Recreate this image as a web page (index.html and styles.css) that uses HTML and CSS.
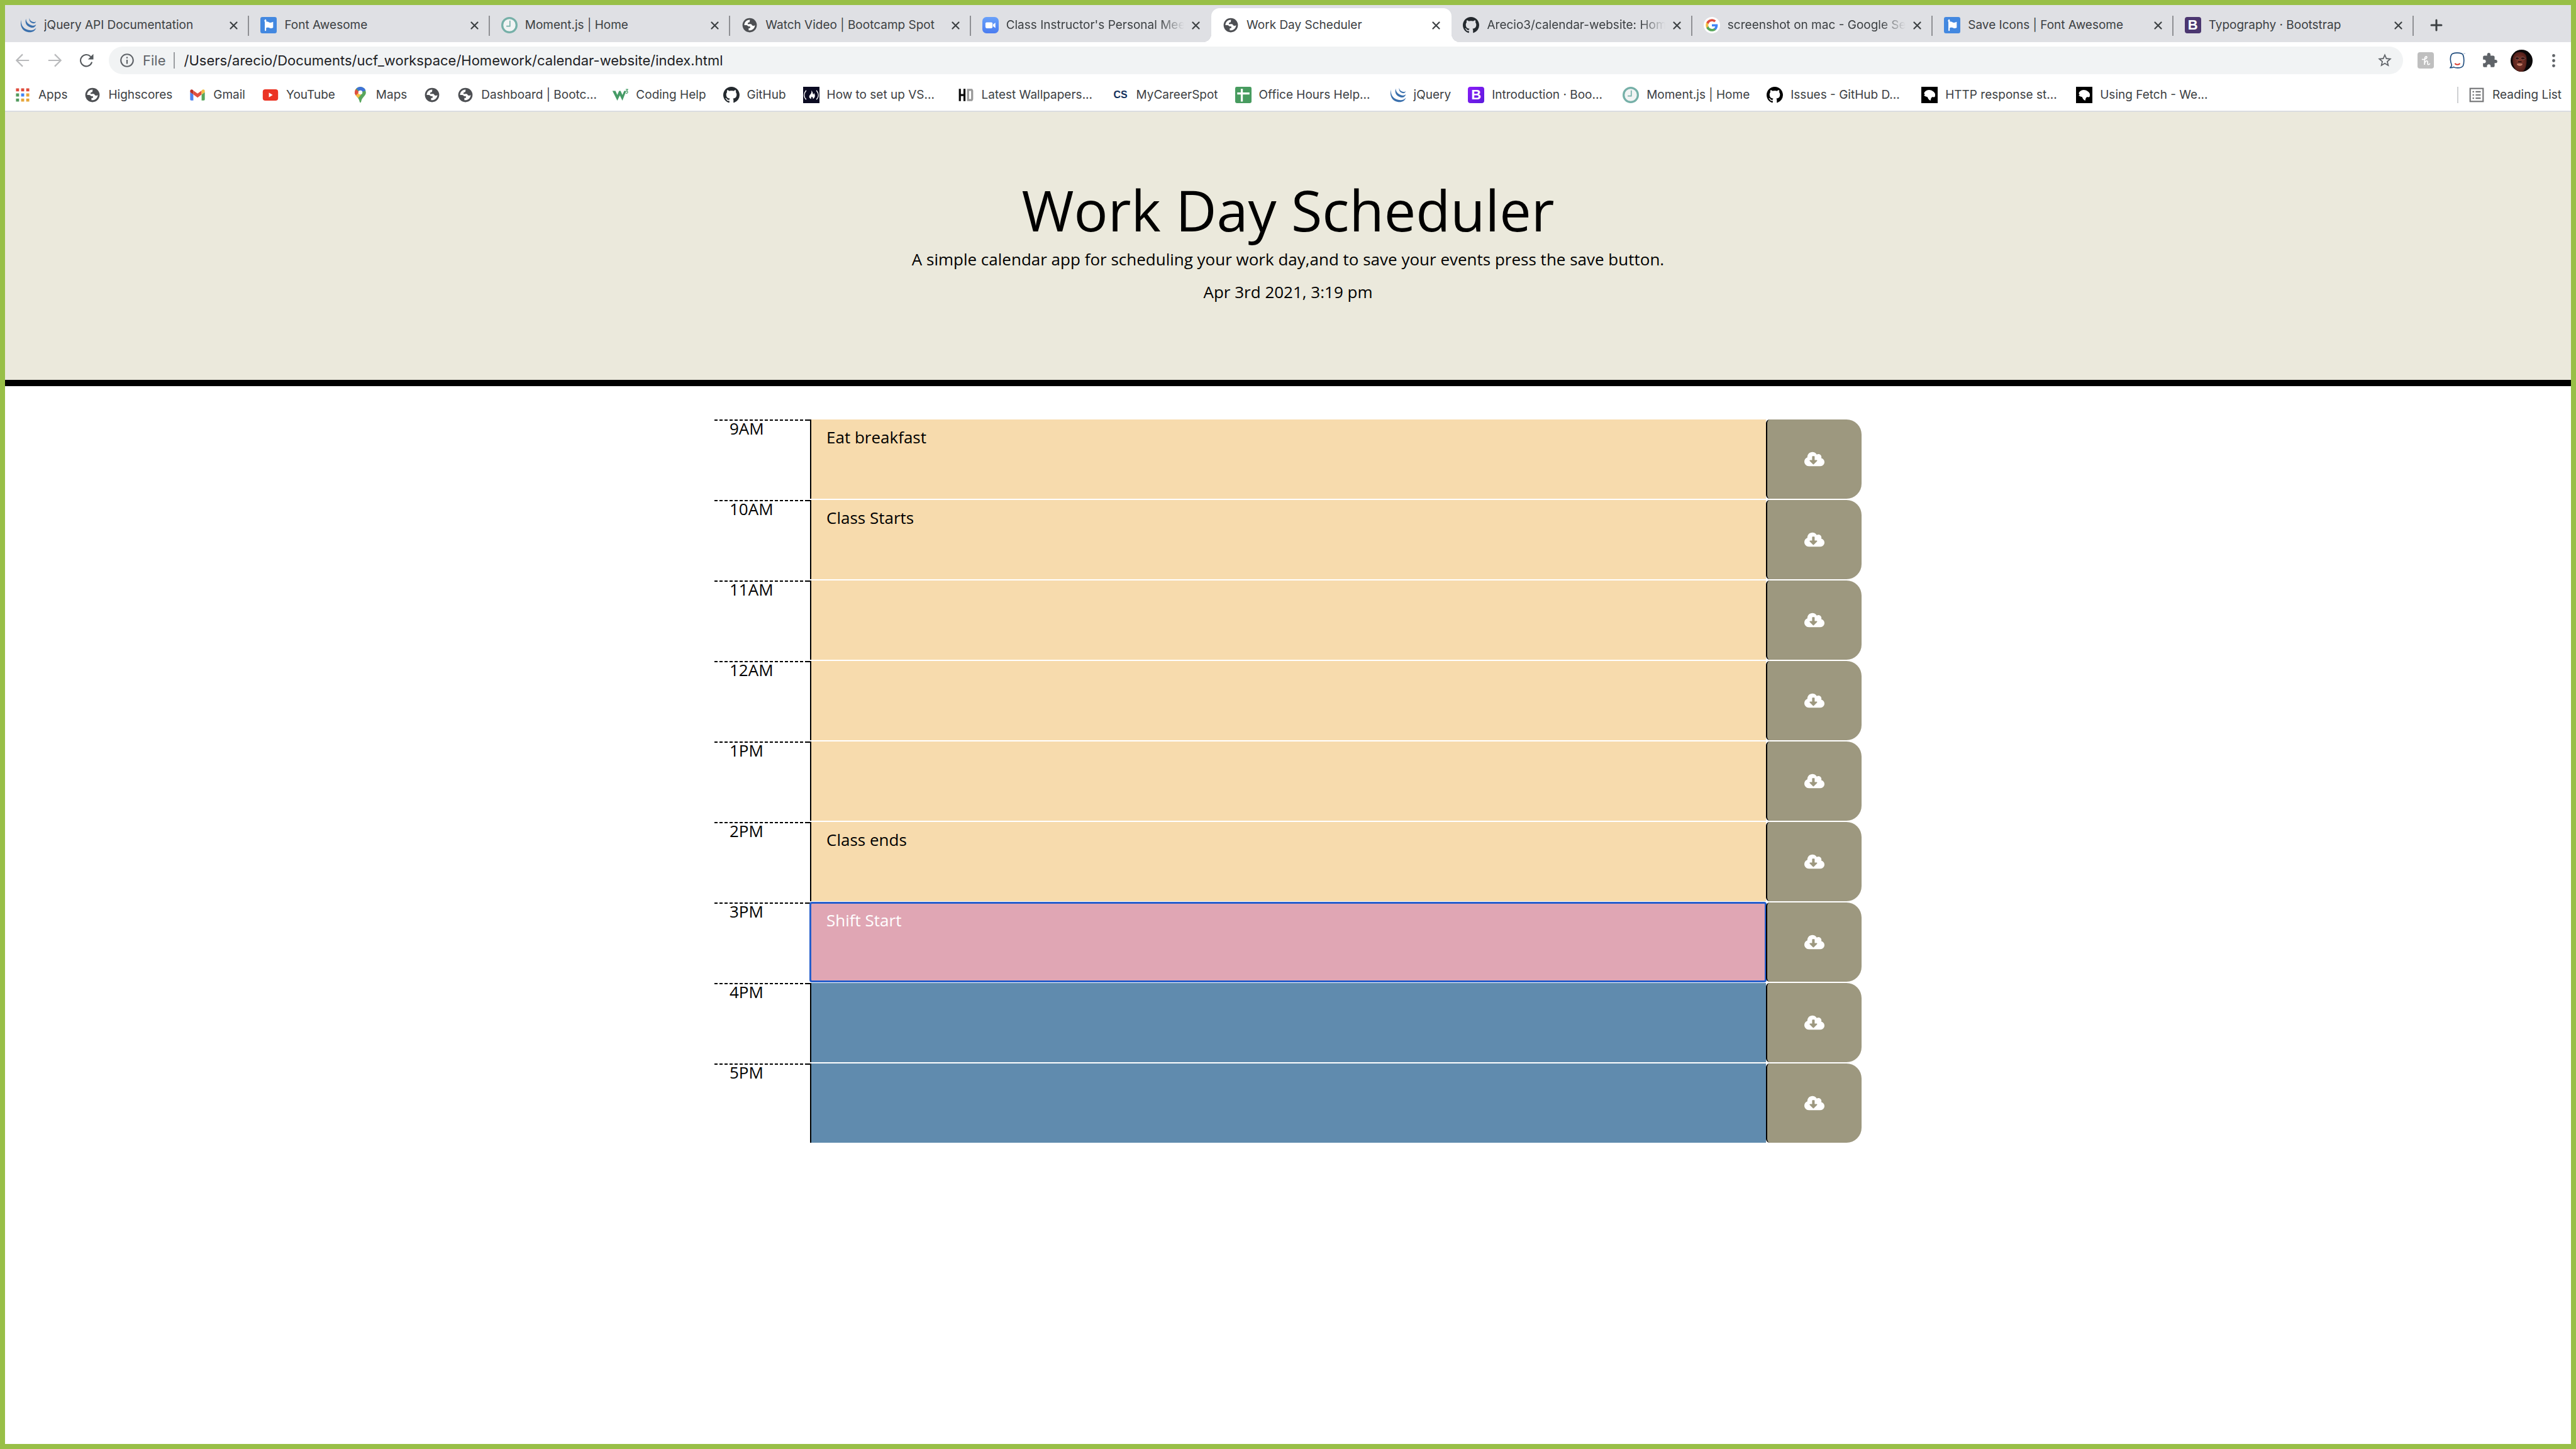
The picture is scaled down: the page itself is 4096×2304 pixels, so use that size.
FILE: index.html
```html
<!DOCTYPE html>
<html lang="en">
<head>
<meta charset="utf-8">
<title>Work Day Scheduler</title>
<link rel="stylesheet" href="styles.css">
</head>
<body>
<svg class="sprite" aria-hidden="true">
  <defs>
    <linearGradient id="zoom-blue" x1="0" y1="0" x2="0" y2="1"><stop offset="0" stop-color="#69a1fa"/><stop offset="1" stop-color="#4a7cf0"/></linearGradient>
    <linearGradient id="boot-violet" x1="0" y1="0" x2="1" y2="1"><stop offset="0" stop-color="#8a1cf8"/><stop offset="1" stop-color="#5a1bdc"/></linearGradient>
    <radialGradient id="face" cx=".5" cy=".5" r=".6"><stop offset="0" stop-color="#8a3d30"/><stop offset="1" stop-color="#4a1a16"/></radialGradient>
    <clipPath id="avatar-clip"><circle cx="22" cy="22" r="22"/></clipPath>
  </defs>
  <symbol id="i-jquery" viewBox="0 0 100 96"><g fill="#3a70ad"><path d="M8 14C-4 42 8 86 52 91c24 2 40-8 46-26-10 12-26 17-46 13C20 72 2 46 8 14z"/><path d="M36 9c-9 22 2 49 33 54 16 2 25-6 29-20-8 8-18 10-29 6-20-7-33-20-33-40z"/><path d="M57 4c-4 18 8 32 24 33 10 0 14-5 16-12-6 5-13 6-20 3C64 24 57 15 57 4z"/></g></symbol>
  <symbol id="i-flag" viewBox="0 0 32 32"><rect width="32" height="32" rx="4" fill="#4388e0"/><path d="M10 6v20" stroke="#fff" stroke-width="2.600" stroke-linecap="round"/><circle cx="9.700" cy="7.500" r="2" fill="#fff"/><path d="M10 10c4-3 7 2 10 1 2 0 3-1 5-1.500V21c-4 2-6 1-8 0-3-1-5 0-7 1z" fill="#fff"/></symbol>
  <symbol id="i-moment" viewBox="0 0 32 32"><circle cx="16" cy="16" r="14" fill="#f2f4f4" stroke="#76b0a8" stroke-width="4"/><path d="M17 7v11h-7" fill="none" stroke="#76b0a8" stroke-width="2"/></symbol>
  <symbol id="i-globe" viewBox="-2 -2 32 32"><circle cx="14" cy="14" r="14" fill="#4d4f53"/><path d="M14.500 3.500C8.500 3 3.500 8 3.500 14h4c2.500 0 3 2.600 5 2.600H15v3.200h-3v4.400c7 .6 12.300-4.200 12.400-10.200-1.600 2-4.700 1.200-5.900 0-1-3-4-2-8-2-.8-2 .5-3.200 2.500-3.400 1.500-.3 1-2.600 1.500-5.100z" fill="#fff"/></symbol>
  <symbol id="i-zoom" viewBox="0 0 32 32"><rect width="32" height="32" rx="8" fill="url(#zoom-blue)"/><rect x="6" y="10.500" width="14" height="11.500" rx="2.500" fill="#fff"/><path d="M21 14.500l4.500-3.500v10.500L21 18z" fill="#fff"/></symbol>
  <symbol id="i-github" viewBox="0 0 16 16"><path fill="currentColor" d="M8 0C3.580 0 0 3.580 0 8c0 3.540 2.290 6.530 5.470 7.590.4.07.55-.17.55-.38 0-.19-.01-.82-.01-1.490-2.010.37-2.530-.49-2.690-.94-.09-.23-.48-.94-.82-1.130-.28-.15-.68-.52-.01-.53.63-.01 1.080.58 1.230.82.72 1.210 1.870.87 2.330.66.07-.52.28-.87.51-1.070-1.780-.2-3.640-.89-3.640-3.950 0-.87.31-1.590.82-2.150-.08-.2-.36-1.020.08-2.120 0 0 .67-.21 2.200.82.64-.18 1.320-.27 2-.27.68 0 1.360.09 2 .27 1.530-1.040 2.200-.82 2.200-.82.44 1.100.16 1.920.08 2.120.51.56.82 1.270.82 2.150 0 3.070-1.870 3.750-3.650 3.950.29.25.54.73.54 1.480 0 1.070-.01 1.930-.01 2.200 0 .21.15.46.55.38A8.013 8.013 0 0016 8c0-4.420-3.580-8-8-8z"/></symbol>
  <symbol id="i-google" viewBox="0 0 32 32"><circle cx="16" cy="16" r="16" fill="#fff"/><g transform="translate(4 4)"><path fill="#4285f4" d="M23.500 12.300c0-.8-.1-1.600-.2-2.300H12v4.500h6.500c-.3 1.500-1.100 2.800-2.400 3.600v3h3.900c2.200-2.100 3.500-5.200 3.500-8.800z"/><path fill="#57a65a" d="M12 24c3.200 0 6-1.100 8-2.900l-3.900-3c-1.100.7-2.500 1.200-4.100 1.200-3.100 0-5.800-2.100-6.700-5h-4v3.100C3.300 21.300 7.300 24 12 24z"/><path fill="#f3bd42" d="M5.300 14.300c-.5-1.500-.5-3.100 0-4.600V6.600h-4c-1.700 3.400-1.700 7.400 0 10.800z"/><path fill="#e04f3f" d="M12 4.700c1.800 0 3.300.6 4.600 1.800L20 3.100C17.900 1.200 15.200 0 12 0 7.300 0 3.300 2.700 1.300 6.600l4 3.100c.9-2.900 3.600-5 6.700-5z"/></g></symbol>
  <symbol id="i-close" viewBox="0 0 13 13"><path d="M1.500 1.500l10 10m0-10l-10 10" stroke="#3c4043" stroke-width="2.200" stroke-linecap="round"/></symbol>
  <symbol id="i-plus" viewBox="0 0 20 20"><path d="M10 2v16M2 10h16" stroke="#3c4043" stroke-width="3" stroke-linecap="round"/></symbol>
  <symbol id="i-back" viewBox="0 0 80 78"><path d="M77 39H6M40 4L5 39l35 35" fill="none" stroke="#b9babc" stroke-width="8"/></symbol>
  <symbol id="i-forward" viewBox="0 0 80 78"><path d="M3 39h71M40 4l35 35-35 35" fill="none" stroke="#b9babc" stroke-width="8"/></symbol>
  <symbol id="i-reload" viewBox="0 0 84 80"><path d="M72 53A35 35 0 1 1 64 16" fill="none" stroke="#55595d" stroke-width="8" stroke-linecap="round"/><path d="M82 1v33H49z" fill="#55595d"/></symbol>
  <symbol id="i-info" viewBox="0 0 24 24"><path fill="#5f6368" d="M11 7h2v2h-2zm0 4h2v6h-2zm1-9C6.480 2 2 6.480 2 12s4.480 10 10 10 10-4.480 10-10S17.520 2 12 2zm0 18c-4.410 0-8-3.590-8-8s3.590-8 8-8 8 3.590 8 8-3.590 8-8 8z"/></symbol>
  <symbol id="i-star" viewBox="0 0 24 24"><path fill="#5f6368" d="M22 9.240l-7.190-.62L12 2 9.190 8.630 2 9.240l5.460 4.730L5.820 21 12 17.270 18.180 21l-1.630-7.030L22 9.240zM12 15.400l-3.760 2.270 1-4.280-3.320-2.880 4.380-.38L12 6.100l1.710 4.040 4.380.38-3.320 2.880 1 4.280L12 15.400z"/></symbol>
  <symbol id="i-honey" viewBox="0 0 96 96"><rect width="96" height="96" rx="14" fill="#bfbfbf"/><path d="M28 42c12 2 28-4 27-13-2-8-12-3-13 9l-1 36c1-14 6-24 14-23 10 2 0 22 8 22 4 0 7-2 9-5" fill="none" stroke="#fff" stroke-width="6" stroke-linecap="round"/></symbol>
  <symbol id="i-smile" viewBox="0 0 96 96"><path d="M12 74C4 56 2 30 10 16 18 2 36 4 46 4s26-1 33 12c7 16 7 48 0 64-8 13-23 12-33 12-9 0-16-1-22-5-6 4-13 4-20 4 5-4 8-9 8-17z" fill="#fff" stroke="#1c4a7c" stroke-width="6"/><path d="M31 66c6 9 24 9 30 0" fill="none" stroke="#d93a2b" stroke-width="7"/><path d="M82 8h10" stroke="#7f9bb8" stroke-width="3"/></symbol>
  <symbol id="i-puzzle" viewBox="0 0 24 24"><path fill="#5f6368" d="M20.500 11H19V7c0-1.100-.9-2-2-2h-4V3.500C13 2.120 11.880 1 10.500 1S8 2.120 8 3.500V5H4c-1.100 0-1.990.9-1.990 2v3.800H3.500c1.490 0 2.700 1.210 2.700 2.700s-1.210 2.700-2.700 2.700H2V20c0 1.100.9 2 2 2h3.800v-1.500c0-1.490 1.210-2.700 2.700-2.700 1.490 0 2.700 1.210 2.700 2.700V22H17c1.100 0 2-.9 2-2v-4h1.500c1.380 0 2.500-1.120 2.500-2.500S21.880 11 20.500 11z"/></symbol>
  <symbol id="i-avatar" viewBox="0 0 44 44"><g clip-path="url(#avatar-clip)"><rect width="44" height="44" fill="#0b0809"/><path d="M4 20C5 8 12 4 20 5c9 0 13 7 12 16 0 10-2 18-8 23H14C8 38 4 30 4 20z" fill="url(#face)"/><path d="M9 17c1-3 7-3 8 0 0 4-7 4-8 0zm11 0c1-3 7-3 9 0 0 4-8 4-9 0z" fill="#351311" stroke="#8b6b64"/><path d="M15 24h7" stroke="#2b0f0d" stroke-width="2"/><path d="M11 28c4-2 10-2 14 0-1 7-12 7-14 0z" fill="#c07864" stroke="#3a1411"/></g></symbol>
  <symbol id="i-dots" viewBox="0 0 6 26"><g fill="#5f6368"><circle cx="3" cy="3" r="3"/><circle cx="3" cy="13" r="3"/><circle cx="3" cy="23" r="3"/></g></symbol>
  <symbol id="i-apps" viewBox="-3 -3 32 32"><path fill="#df4b3c" d="M0 0h6v6H0zm10 0h6v6h-6zm10 0h6v6h-6z"/><path fill="#529a5d" d="M0 10h6v6H0zm0 10h6v6H0z"/><path fill="#4285f4" d="M10 10h6v6h-6z"/><path fill="#e6a63b" d="M20 10h6v6h-6zM10 20h6v6h-6zm10 0h6v6h-6z"/></symbol>
  <symbol id="i-gmail" viewBox="-4 -16 97 97"><path fill="#4f83ee" d="M1 16l19 14v35H7a6 6 0 0 1-6-6z"/><path fill="#58a65c" d="M88 16L69 30v35h13a6 6 0 0 0 6-6z"/><path fill="#e04f3f" d="M20 6l25 18L69 6v24L45 48 20 30z"/><path fill="#b83027" d="M1 10C1 0 10-3 17 3l3 3v24L1 16z"/><path fill="#f3bd42" d="M88 10C88 0 79-3 72 3l-3 3v24l19-14z"/></symbol>
  <symbol id="i-youtube" viewBox="0 0 32 32"><rect x="1" y="5" width="30" height="22" rx="5" fill="#eb3323"/><path d="M13 11.500l7.500 4.500-7.500 4.500z" fill="#fff"/></symbol>
  <symbol id="i-maps" viewBox="-5 0 32 32"><clipPath id="pin"><path d="M11 0a11 11 0 0 1 11 11c0 6-7 9-9 16-.6 3-1 4-2 4s-1.400-1-2-4C7 20 0 17 0 11A11 11 0 0 1 11 0z"/></clipPath><g clip-path="url(#pin)"><rect width="22" height="32" fill="#58a65c"/><path d="M0 0h22v7L11 11z" fill="#3f72d8"/><path d="M0 3l8 7-6 8-4-6z" fill="#e04f3f"/><path d="M13 8l-1 8-7 8-5-6L11 7z" fill="#f3bd42"/><path d="M0 4l9 6-7 7-4-6z" fill="#e04f3f"/></g><circle cx="11" cy="11" r="4" fill="#fff"/></symbol>
  <symbol id="i-w3" viewBox="0 0 32 32"><path d="M1 8h6l3.500 8L14 8h3l3.500 8L24 8h4l-7.500 19-5-10-5 10z" fill="#459b66"/><path d="M27 5h4l-2.500 3.500c4 0 3 5-1.500 4" fill="none" stroke="#459b66" stroke-width="1.500"/></symbol>
  <symbol id="i-fcc" viewBox="0 0 32 32"><rect width="32" height="32" fill="#0b0b22"/><path d="M6 7c-5 6-5 13 0 18M26 7c5 6 5 13 0 18" fill="none" stroke="#fff" stroke-width="1.800"/><path d="M16 7c4 4 2 6 4 8 1-1 1-2 1-3 4 5 2 10-2 12 1-3-1-4-2-5-1 2-2 3-1 5-5-2-5-6-2-9 2-2 3-4 2-8z" fill="#fff"/></symbol>
  <symbol id="i-hd" viewBox="0 0 32 32"><path d="M4 4v24M13 4v24M4 16h9" stroke="#0b0b0b" stroke-width="4"/><path d="M20 6h7l1 2v16l-1 2h-7z" fill="none" stroke="#999" stroke-width="4"/></symbol>
  <symbol id="i-sheet" viewBox="0 0 32 32"><rect width="32" height="32" rx="3" fill="#479b5f"/><path d="M13 4v25M4 13h24" stroke="#fff" stroke-width="4"/></symbol>
  <symbol id="i-mdn" viewBox="0 0 32 32"><rect width="32" height="32"/><path d="M6 11c3-5 9-6 14-4 4 2 8 5 7 10 0 3-1 4-4 3-4 0-4 3-5 7-3-1-5-4-6-7-3-1-5-1-7-4 1 0 2 0 2-1-1-1-2-2-1-4z" fill="#fff"/></symbol>
  <symbol id="i-list" viewBox="-6 -6 96 96"><rect x="4" y="4" width="76" height="76" fill="#fff" stroke="#757678" stroke-width="8"/><path d="M18 23h9m9 0h30M18 42h9m9 0h30M18 61h9m9 0h30" stroke="#757678" stroke-width="8"/></symbol>
  <symbol id="i-save" viewBox="0 0 640 512"><path fill="#fff" d="M537.600 226.600c4.100-10.700 6.400-22.400 6.400-34.600 0-53-43-96-96-96-19.700 0-38.100 6-53.300 16.200C367 64.200 315.300 32 256 32c-88.400 0-160 71.600-160 160 0 2.700.1 5.400.2 8.100C40.200 219.800 0 273.200 0 336c0 79.500 64.500 144 144 144h368c70.700 0 128-57.300 128-128 0-61.900-44-113.600-102.400-125.400zm-132.900 88.700L299.300 420.700c-6.200 6.200-16.400 6.200-22.600 0L171.300 315.300c-10.100-10.100-2.900-27.300 11.300-27.300H248V176c0-8.800 7.200-16 16-16h48c8.800 0 16 7.200 16 16v112h65.400c14.200 0 21.400 17.200 11.300 27.300z"/></symbol>
</svg>

<div class="browser">
  <nav class="tabstrip" aria-label="Tabs">
    <div class="tabs">
      <div class="tab"><svg class="icon"><use href="#i-jquery"/></svg><a class="tab-title" href="#">jQuery API Documentation</a><button class="close" aria-label="Close tab"><svg><use href="#i-close"/></svg></button></div>
      <div class="tab"><svg class="icon"><use href="#i-flag"/></svg><a class="tab-title" href="#">Font Awesome</a><button class="close" aria-label="Close tab"><svg><use href="#i-close"/></svg></button></div>
      <div class="tab"><svg class="icon"><use href="#i-moment"/></svg><a class="tab-title" href="#">Moment.js | Home</a><button class="close" aria-label="Close tab"><svg><use href="#i-close"/></svg></button></div>
      <div class="tab"><svg class="icon"><use href="#i-globe"/></svg><a class="tab-title" href="#">Watch Video | Bootcamp Spot</a><button class="close" aria-label="Close tab"><svg><use href="#i-close"/></svg></button></div>
      <div class="tab"><svg class="icon"><use href="#i-zoom"/></svg><a class="tab-title fade" href="#">Class Instructor's Personal Meeting</a><button class="close" aria-label="Close tab"><svg><use href="#i-close"/></svg></button></div>
      <div class="tab active"><svg class="icon"><use href="#i-globe"/></svg><a class="tab-title" href="#">Work Day Scheduler</a><button class="close" aria-label="Close tab"><svg><use href="#i-close"/></svg></button></div>
      <div class="tab"><svg class="icon octo"><use href="#i-github"/></svg><a class="tab-title fade" href="#">Arecio3/calendar-website: Homework</a><button class="close" aria-label="Close tab"><svg><use href="#i-close"/></svg></button></div>
      <div class="tab"><svg class="icon"><use href="#i-google"/></svg><a class="tab-title fade" href="#">screenshot on mac - Google Search</a><button class="close" aria-label="Close tab"><svg><use href="#i-close"/></svg></button></div>
      <div class="tab"><svg class="icon"><use href="#i-flag"/></svg><a class="tab-title" href="#">Save Icons | Font Awesome</a><button class="close" aria-label="Close tab"><svg><use href="#i-close"/></svg></button></div>
      <div class="tab"><span class="badge boot4">B</span><a class="tab-title" href="#">Typography · Bootstrap</a><button class="close" aria-label="Close tab"><svg><use href="#i-close"/></svg></button></div>
    </div>
    <div class="strip-end"><button class="new-tab" aria-label="New tab"><svg><use href="#i-plus"/></svg></button></div>
  </nav>

  <div class="toolbar">
    <div class="tools">
      <button class="tool" aria-label="Back"><svg class="nav-icon"><use href="#i-back"/></svg></button>
      <button class="tool" aria-label="Forward"><svg class="nav-icon"><use href="#i-forward"/></svg></button>
      <button class="tool" aria-label="Reload"><svg class="nav-icon"><use href="#i-reload"/></svg></button>
    </div>
    <div class="omnibox">
      <svg class="icon"><use href="#i-info"/></svg>
      <label class="scheme" for="address">File</label>
      <input class="address" id="address" type="text" value="/Users/arecio/Documents/ucf_workspace/Homework/calendar-website/index.html">
      <button class="bookmark-star" aria-label="Bookmark this page"><svg class="icon"><use href="#i-star"/></svg></button>
    </div>
    <div class="tools">
      <button class="tool" aria-label="Coupons"><svg class="icon"><use href="#i-honey"/></svg></button>
      <button class="tool" aria-label="Assistant"><svg class="icon"><use href="#i-smile"/></svg></button>
      <button class="tool" aria-label="Extensions"><svg class="icon"><use href="#i-puzzle"/></svg></button>
      <button class="tool" aria-label="Profile"><svg class="avatar"><use href="#i-avatar"/></svg></button>
      <button class="tool" aria-label="Menu"><svg class="dots"><use href="#i-dots"/></svg></button>
    </div>
  </div>

  <nav class="bookmarks" aria-label="Bookmarks">
    <a class="bookmark" href="#"><svg class="icon"><use href="#i-apps"/></svg>Apps</a>
    <a class="bookmark" href="#"><svg class="icon"><use href="#i-globe"/></svg>Highscores</a>
    <a class="bookmark" href="#"><svg class="icon"><use href="#i-gmail"/></svg>Gmail</a>
    <a class="bookmark" href="#"><svg class="icon"><use href="#i-youtube"/></svg>YouTube</a>
    <a class="bookmark" href="#"><svg class="icon"><use href="#i-maps"/></svg>Maps</a>
    <a class="bookmark" href="#" aria-label="Untitled"><svg class="icon"><use href="#i-globe"/></svg></a>
    <a class="bookmark long" href="#"><svg class="icon"><use href="#i-globe"/></svg>Dashboard | Bootc...</a>
    <a class="bookmark" href="#"><svg class="icon"><use href="#i-w3"/></svg>Coding Help</a>
    <a class="bookmark" href="#"><svg class="icon octo"><use href="#i-github"/></svg>GitHub</a>
    <a class="bookmark long" href="#"><svg class="icon"><use href="#i-fcc"/></svg>How to set up VS...</a>
    <a class="bookmark long" href="#"><svg class="icon"><use href="#i-hd"/></svg>Latest Wallpapers...</a>
    <a class="bookmark" href="#"><span class="badge career">CS</span>MyCareerSpot</a>
    <a class="bookmark long" href="#"><svg class="icon"><use href="#i-sheet"/></svg>Office Hours Help...</a>
    <a class="bookmark" href="#"><svg class="icon"><use href="#i-jquery"/></svg>jQuery</a>
    <a class="bookmark long" href="#"><span class="badge boot5">B</span>Introduction · Boo...</a>
    <a class="bookmark" href="#"><svg class="icon"><use href="#i-moment"/></svg>Moment.js | Home</a>
    <a class="bookmark long" href="#"><svg class="icon octo-black"><use href="#i-github"/></svg>Issues - GitHub D...</a>
    <a class="bookmark long" href="#"><svg class="icon"><use href="#i-mdn"/></svg>HTTP response st...</a>
    <a class="bookmark long" href="#"><svg class="icon"><use href="#i-mdn"/></svg>Using Fetch - We...</a>
    <a class="bookmark reading-list" href="#"><svg class="icon"><use href="#i-list"/></svg>Reading List</a>
  </nav>
</div>

<header class="hero">
  <h1>Work Day Scheduler</h1>
  <p>A simple calendar app for scheduling your work day,and to save your events press the save button.</p>
  <p>Apr 3rd 2021, 3:19 pm</p>
</header>

<main class="planner">
  <div class="slot past"><label class="hour" for="h9">9AM</label><textarea id="h9">Eat breakfast</textarea><button class="save" aria-label="Save"><svg><use href="#i-save"/></svg></button></div>
  <div class="slot past"><label class="hour" for="h10">10AM</label><textarea id="h10">Class Starts</textarea><button class="save" aria-label="Save"><svg><use href="#i-save"/></svg></button></div>
  <div class="slot past"><label class="hour" for="h11">11AM</label><textarea id="h11"></textarea><button class="save" aria-label="Save"><svg><use href="#i-save"/></svg></button></div>
  <div class="slot past"><label class="hour" for="h12">12AM</label><textarea id="h12"></textarea><button class="save" aria-label="Save"><svg><use href="#i-save"/></svg></button></div>
  <div class="slot past"><label class="hour" for="h13">1PM</label><textarea id="h13"></textarea><button class="save" aria-label="Save"><svg><use href="#i-save"/></svg></button></div>
  <div class="slot past"><label class="hour" for="h14">2PM</label><textarea id="h14">Class ends</textarea><button class="save" aria-label="Save"><svg><use href="#i-save"/></svg></button></div>
  <div class="slot present"><label class="hour" for="h15">3PM</label><textarea id="h15">Shift Start</textarea><button class="save" aria-label="Save"><svg><use href="#i-save"/></svg></button></div>
  <div class="slot future"><label class="hour" for="h16">4PM</label><textarea id="h16"></textarea><button class="save" aria-label="Save"><svg><use href="#i-save"/></svg></button></div>
  <div class="slot future"><label class="hour" for="h17">5PM</label><textarea id="h17"></textarea><button class="save" aria-label="Save"><svg><use href="#i-save"/></svg></button></div>
</main>
</body>
</html>
```
FILE: styles.css
```css
* { box-sizing: border-box; }

body {
  margin: 0;
  min-height: 100vh;
  border: 8px solid #98bf47;
  background: #fff;
  color: #000;
  font-family: "Open Sans", sans-serif;
  font-size: 26px;
}

a { color: inherit; text-decoration: none; }

button {
  display: flex;
  align-items: center;
  justify-content: center;
  padding: 0;
  border: 0;
  background: none;
  font: inherit;
}

svg { flex: none; display: block; }
.sprite { position: absolute; width: 0; height: 0; }
.icon { width: 26px; height: 26px; }
.octo { color: #24292e; }
.octo-black { color: #000; }

/* Lettered site badges */
.badge {
  flex: none;
  width: 26px;
  height: 26px;
  border-radius: 4px;
  font: bold 22px/26px "Liberation Sans", sans-serif;
  text-align: center;
  color: #fff;
}
.boot4 { background: #4b3670; }
.boot5 { background: linear-gradient(135deg, #8a1cf8, #5a1bdc); }
.career { color: #12305c; font-size: 16px; }

/* Browser chrome */
.browser {
  font-family: Inter, sans-serif;
  font-size: 19px;
  color: #3c4043;
  border-bottom: 2px solid #dadce0;
}

.tabstrip {
  display: flex;
  height: 59px;
  padding: 5px 0 0 6px;
  background: #dfe0e4;
}
.tabs { display: flex; flex: 1; min-width: 0; }
.tab {
  position: relative;
  display: flex;
  flex: 1 1 0;
  min-width: 0;
  align-items: center;
  gap: 12px;
  padding: 0 18px;
}
.tab::after {
  content: "";
  position: absolute;
  right: 0;
  top: 12px;
  width: 2px;
  height: 32px;
  background: #8f9094;
}
.tab:has(+ .active)::after { display: none; }
.tab-title { flex: 1; min-width: 0; overflow: hidden; white-space: nowrap; line-height: 26px; }
.fade { mask-image: linear-gradient(to right, #000 calc(100% - 40px), transparent); }
.close svg { width: 13px; height: 13px; }

.active { background: #fff; border-radius: 13px 13px 0 0; }
.active::before,
.active::after {
  content: "";
  position: absolute;
  top: auto;
  bottom: 0;
  width: 13px;
  height: 13px;
}
.active::before { left: -13px; background: radial-gradient(circle at 0 0, #dfe0e4 13px, #fff 13px); }
.active::after { right: -13px; background: radial-gradient(circle at 100% 0, #dfe0e4 13px, #fff 13px); }

.strip-end { display: flex; width: 250px; padding-left: 26px; }
.new-tab svg { width: 20px; height: 20px; }

.toolbar { display: flex; gap: 10px; padding: 7px 2px; }
.tools { display: flex; }
.tool { width: 51px; }
.nav-icon { width: 22px; height: 22px; }
.avatar { width: 35px; height: 35px; }
.dots { width: 5px; height: 21px; }

.omnibox {
  display: flex;
  flex: 1;
  align-items: center;
  height: 44px;
  padding: 0 16px;
  border-radius: 22px;
  background: #f1f3f4;
  font-size: 22px;
}
.scheme { margin: 0 13px 0 12px; color: #5f6368; }
.address {
  flex: 1;
  height: 26px;
  padding: 0 0 0 14px;
  border: 0;
  border-left: 2px solid #9a9da1;
  outline: 0;
  background: none;
  font: inherit;
  color: #202124;
}

.bookmarks { display: flex; gap: 27px; height: 51px; padding: 0 15px; align-items: center; }
.bookmark { display: flex; align-items: center; gap: 12px; white-space: nowrap; line-height: 26px; }
.long { width: 219px; }
.reading-list { margin-left: auto; padding-left: 16px; border-left: 2px solid #cfd0d2; }

/* Page header */
.hero {
  padding: 101px 24px 107px;
  border-bottom: 10px solid #000;
  background: #ebe9dc;
  text-align: center;
}
.hero h1 { margin: 0 0 6px; font-size: 90px; font-weight: 400; line-height: 108px; }
.hero p { margin: 0 0 14px; line-height: 38px; }

/* Hour rows */
.planner { width: 100%; max-width: 1824px; margin: 53px auto 0; }
.slot { display: grid; grid-template-columns: 1fr 10fr 1fr; height: 128px; padding-bottom: 2px; }
.hour {
  padding-left: 24px;
  line-height: 28px;
  background:
    linear-gradient(#000, #000) top right / 3px 2px no-repeat,
    repeating-linear-gradient(to right, #000 0 5px, transparent 5px 8px) top / 100% 2px no-repeat;
}
.slot textarea {
  width: 100%;
  height: 100%;
  padding: 14px 24px;
  border: 0;
  border-left: 2px solid #000;
  border-radius: 0;
  outline: 0;
  overflow: hidden;
  resize: none;
  font: inherit;
  line-height: 28px;
  color: #000;
}
.past textarea { background: #f7dbad; }
.future textarea { background: #608bae; }
.present textarea {
  background: #e0a6b4;
  color: #fff;
  border-radius: 3px;
  outline: 3px solid #265fcc;
  outline-offset: -2px;
}
.save {
  position: relative;
  border-left: 2px solid #000;
  border-radius: 6px 24px 24px 6px;
  background: #9d987f;
}
.save svg { width: 32px; height: 26px; }
```
